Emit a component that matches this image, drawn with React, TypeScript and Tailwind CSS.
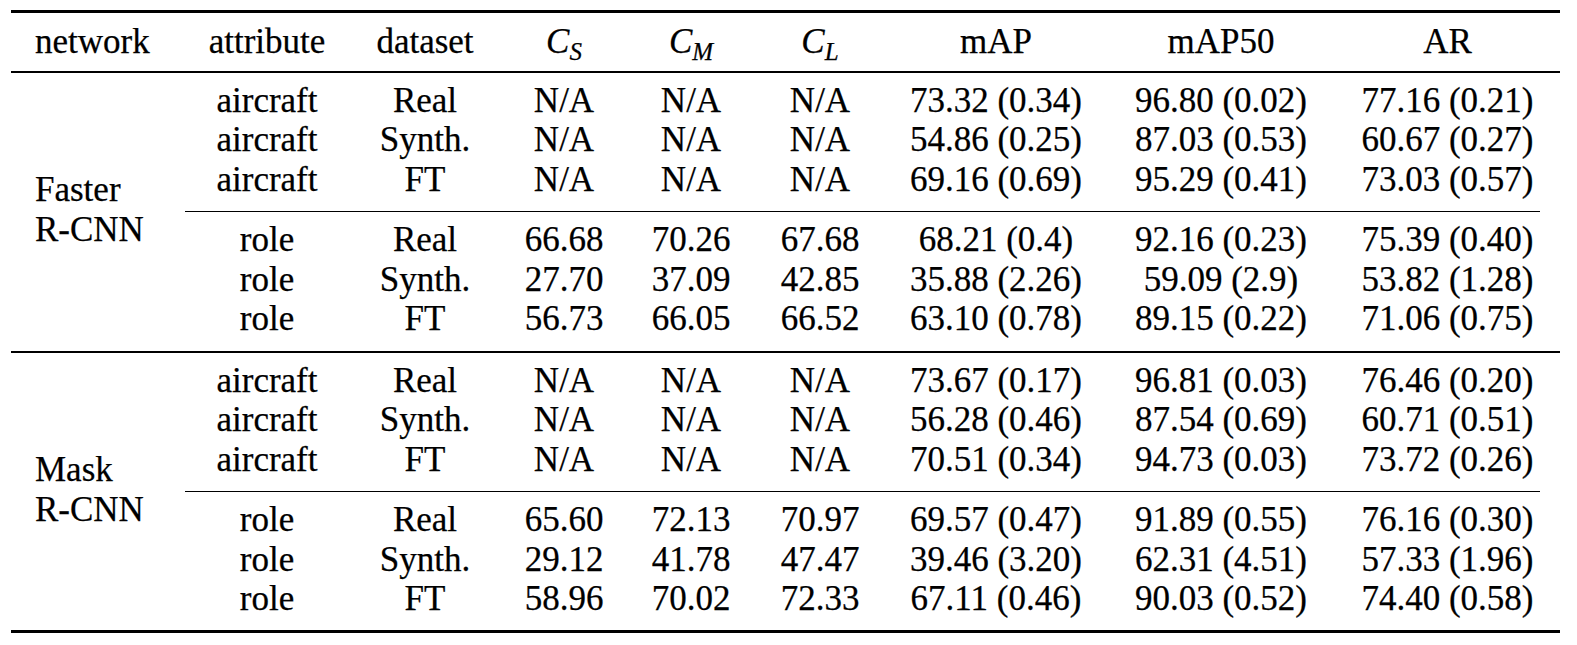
import React from "react";

type Row = [string, string, string, string, string, string, string, string];

const groups: { name: [string, string]; blocks: Row[][] }[] = [
  {
    name: ["Faster", "R-CNN"],
    blocks: [
      [
        ["aircraft", "Real", "N/A", "N/A", "N/A", "73.32 (0.34)", "96.80 (0.02)", "77.16 (0.21)"],
        ["aircraft", "Synth.", "N/A", "N/A", "N/A", "54.86 (0.25)", "87.03 (0.53)", "60.67 (0.27)"],
        ["aircraft", "FT", "N/A", "N/A", "N/A", "69.16 (0.69)", "95.29 (0.41)", "73.03 (0.57)"],
      ],
      [
        ["role", "Real", "66.68", "70.26", "67.68", "68.21 (0.4)", "92.16 (0.23)", "75.39 (0.40)"],
        ["role", "Synth.", "27.70", "37.09", "42.85", "35.88 (2.26)", "59.09 (2.9)", "53.82 (1.28)"],
        ["role", "FT", "56.73", "66.05", "66.52", "63.10 (0.78)", "89.15 (0.22)", "71.06 (0.75)"],
      ],
    ],
  },
  {
    name: ["Mask", "R-CNN"],
    blocks: [
      [
        ["aircraft", "Real", "N/A", "N/A", "N/A", "73.67 (0.17)", "96.81 (0.03)", "76.46 (0.20)"],
        ["aircraft", "Synth.", "N/A", "N/A", "N/A", "56.28 (0.46)", "87.54 (0.69)", "60.71 (0.51)"],
        ["aircraft", "FT", "N/A", "N/A", "N/A", "70.51 (0.34)", "94.73 (0.03)", "73.72 (0.26)"],
      ],
      [
        ["role", "Real", "65.60", "72.13", "70.97", "69.57 (0.47)", "91.89 (0.55)", "76.16 (0.30)"],
        ["role", "Synth.", "29.12", "41.78", "47.47", "39.46 (3.20)", "62.31 (4.51)", "57.33 (1.96)"],
        ["role", "FT", "58.96", "70.02", "72.33", "67.11 (0.46)", "90.03 (0.52)", "74.40 (0.58)"],
      ],
    ],
  },
];

function MathC({ sub }: { sub: string }) {
  return (
    <span className="whitespace-nowrap">
      <span className="italic">C</span>
      <span className="italic text-[25px] leading-none align-[-7px]">{sub}</span>
    </span>
  );
}

function DataRow({ row }: { row: Row }) {
  return (
    <div className="grid grid-cols-[164px_152px_126px_128px_130px_222px_228px_225px] h-[39.5px] text-center whitespace-nowrap">
      {row.map((c, i) => (
        <div key={i}>{c}</div>
      ))}
    </div>
  );
}

function Group({ g }: { g: (typeof groups)[number] }) {
  return (
    <div className="flex">
      <div className="w-[174px] pl-[24px] flex flex-col justify-center">
        <div className="h-[39.5px]">{g.name[0]}</div>
        <div className="h-[39.5px]">{g.name[1]}</div>
      </div>
      <div className="w-[1375px] flex flex-col">
        <div>
          {g.blocks[0].map((r, i) => (
            <DataRow key={i} row={r} />
          ))}
        </div>
        <div className="mt-[12px] mr-[20px] h-[1px] bg-black" />
        <div className="mt-[8px]">
          {g.blocks[1].map((r, i) => (
            <DataRow key={i} row={r} />
          ))}
        </div>
      </div>
    </div>
  );
}

export default function App() {
  return (
    <div className="w-[1577px] h-[645px] overflow-hidden bg-white text-black [font-family:Liberation_Serif,Times_New_Roman,serif] [-webkit-text-stroke:0.25px_black] text-[35px] leading-[39.5px] pt-[10px] pl-[11px]">
      <div className="w-[1549px]">
        <div className="h-[3px] bg-black" />
        <div className="mt-[9px] h-[39.5px] grid grid-cols-[174px_164px_152px_126px_128px_130px_222px_228px_225px] text-center whitespace-nowrap">
          <div className="text-left pl-[24px]">network</div>
          <div>attribute</div>
          <div>dataset</div>
          <div>
            <MathC sub="S" />
          </div>
          <div>
            <MathC sub="M" />
          </div>
          <div>
            <MathC sub="L" />
          </div>
          <div>mAP</div>
          <div>mAP50</div>
          <div>AR</div>
        </div>
        <div className="mt-[9px] h-[2px] bg-black" />
        <div className="mt-[8px]">
          <Group g={groups[0]} />
        </div>
        <div className="mt-[12px] h-[2px] bg-black" />
        <div className="mt-[8px]">
          <Group g={groups[1]} />
        </div>
        <div className="mt-[11px] h-[3px] bg-black" />
      </div>
    </div>
  );
}
